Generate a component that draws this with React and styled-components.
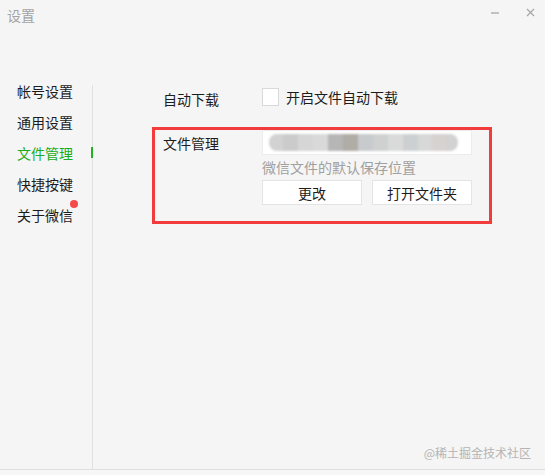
import React from 'react'
import styled, { createGlobalStyle } from 'styled-components'

const GlobalStyle = createGlobalStyle`
  html, body {
    margin: 0;
    padding: 0;
    background: #f5f5f5;
  }
  body {
    font-family: "Noto Sans CJK SC", "Noto Sans", sans-serif;
    font-size: 14px;
    color: #1c1c1c;
  }
`

const Window = styled.div`
  position: relative;
  width: 545px;
  height: 475px;
  display: flex;
  flex-direction: column;
  background: #f5f5f5;
  overflow: hidden;
`

const TitleBar = styled.div`
  height: 76px;
  flex-shrink: 0;
  display: flex;
  align-items: flex-start;
  justify-content: space-between;
`

const Title = styled.div`
  padding: 5px 0 0 7px;
  font-size: 14px;
  line-height: 20px;
  color: #a3a3a3;
`

const WindowButtons = styled.div`
  display: flex;
  align-items: center;
  gap: 27px;
  padding: 8px 10px 0 0;
`

const Minimize = styled.div`
  width: 8px;
  height: 2px;
  background: #c2c2c2;
`

const Body = styled.div`
  flex: 1;
  display: flex;
  border-bottom: 1px solid #dedede;
`

const Nav = styled.div`
  width: 92px;
  flex-shrink: 0;
  display: flex;
  flex-direction: column;
`

const NavItem = styled.div`
  position: relative;
  height: 31px;
  line-height: 31px;
  padding-left: 17px;
  color: ${(p) => (p.$active ? '#1aad19' : '#1c1c1c')};
`

const ActiveMark = styled.span`
  position: absolute;
  right: -1px;
  top: 9px;
  width: 2px;
  height: 11px;
  background: #22b322;
  z-index: 2;
`

const Badge = styled.span`
  position: absolute;
  left: 70px;
  top: 0px;
  width: 8px;
  height: 8px;
  border-radius: 50%;
  background: #f54a4a;
`

const Divider = styled.div`
  width: 1px;
  margin-top: 9px;
  background: #e1e1e1;
`

const Content = styled.div`
  flex: 1;
  display: flex;
  flex-direction: column;
  align-items: flex-start;
  padding: 12px 0 0 59px;
  gap: 19px;
`

const Row = styled.div`
  display: flex;
  align-items: flex-start;
  padding-left: ${(p) => p.$indent || 0}px;
`

const Label = styled.div`
  width: 99px;
  flex-shrink: 0;
  line-height: ${(p) => p.$lh || 18}px;
  padding-top: ${(p) => p.$top || 0}px;
`

const CheckLine = styled.label`
  display: flex;
  align-items: center;
  gap: 7px;
  line-height: 18px;
`

const Checkbox = styled.span`
  width: 15px;
  height: 16px;
  background: #ffffff;
  border: 1px solid #d9d9d9;
`

const Highlight = styled.div`
  width: 340px;
  border: 3px solid #f23b3b;
  box-sizing: border-box;
  padding: 0 17px 16px 8px;
`

const Field = styled.div`
  display: flex;
  flex-direction: column;
`

const PathBox = styled.div`
  box-sizing: border-box;
  width: 210px;
  height: 25px;
  background: #ffffff;
  border: 1px solid #ececec;
  display: flex;
  align-items: center;
  padding-left: 6px;
  overflow: hidden;
`

const Blur = styled.div`
  display: flex;
  height: 17px;
  filter: blur(1.2px);
  border-radius: 8px;
  overflow: hidden;
`

const Pixel = styled.span`
  width: ${(p) => p.$w}px;
  background: ${(p) => p.$c};
`

const Hint = styled.div`
  margin-top: 2px;
  line-height: 20px;
  color: #a0a0a0;
`

const Buttons = styled.div`
  display: flex;
  gap: 10px;
  margin-top: 3px;
`

const Button = styled.div`
  box-sizing: border-box;
  width: 100px;
  height: 25px;
  background: #ffffff;
  border: 1px solid #e4e4e4;
  display: flex;
  align-items: center;
  justify-content: center;
  color: #1c1c1c;
  cursor: pointer;
`

const Footer = styled.div`
  height: 5px;
  background: #f7f7f7;
`

const Watermark = styled.div`
  position: absolute;
  right: 14px;
  bottom: 14px;
  font-size: 12px;
  color: #b4b4b4;
`

const blurred = [
  ['#d2d2d2', 14],
  ['#cbcbcb', 15],
  ['#d6d6d6', 15],
  ['#d9d9d9', 15],
  ['#b6b6b6', 15],
  ['#b0aca6', 15],
  ['#c8cbcd', 15],
  ['#cfd0d0', 15],
  ['#dadada', 15],
  ['#cdd0d2', 15],
  ['#d8d8d8', 14],
  ['#d6d2d0', 14],
  ['#d2d2d2', 12],
]

const navItems = ['帐号设置', '通用设置', '文件管理', '快捷按键', '关于微信']

export default function App() {
  return (
    <>
      <GlobalStyle />
      <Window>
        <TitleBar>
          <Title>设置</Title>
          <WindowButtons>
            <Minimize />
            <svg width="9" height="9" viewBox="0 0 9 9">
              <path d="M1 1L8 8M8 1L1 8" stroke="#a6a6a6" strokeWidth="1.2" />
            </svg>
          </WindowButtons>
        </TitleBar>
        <Body>
          <Nav>
            {navItems.map((item) => (
              <NavItem key={item} $active={item === '文件管理'}>
                {item}
                {item === '文件管理' && <ActiveMark />}
                {item === '关于微信' && <Badge />}
              </NavItem>
            ))}
          </Nav>
          <Divider />
          <Content>
            <Row $indent={11}>
              <Label $top={2}>自动下载</Label>
              <CheckLine>
                <Checkbox />
                开启文件自动下载
              </CheckLine>
            </Row>
            <Highlight>
              <Row>
                <Label $lh={25} $top={1}>文件管理</Label>
                <Field>
                  <PathBox>
                    <Blur>
                      {blurred.map(([c, w], i) => (
                        <Pixel key={i} $c={c} $w={w} />
                      ))}
                    </Blur>
                  </PathBox>
                  <Hint>微信文件的默认保存位置</Hint>
                  <Buttons>
                    <Button>更改</Button>
                    <Button>打开文件夹</Button>
                  </Buttons>
                </Field>
              </Row>
            </Highlight>
          </Content>
        </Body>
        <Footer />
        <Watermark>@稀土掘金技术社区</Watermark>
      </Window>
    </>
  )
}
